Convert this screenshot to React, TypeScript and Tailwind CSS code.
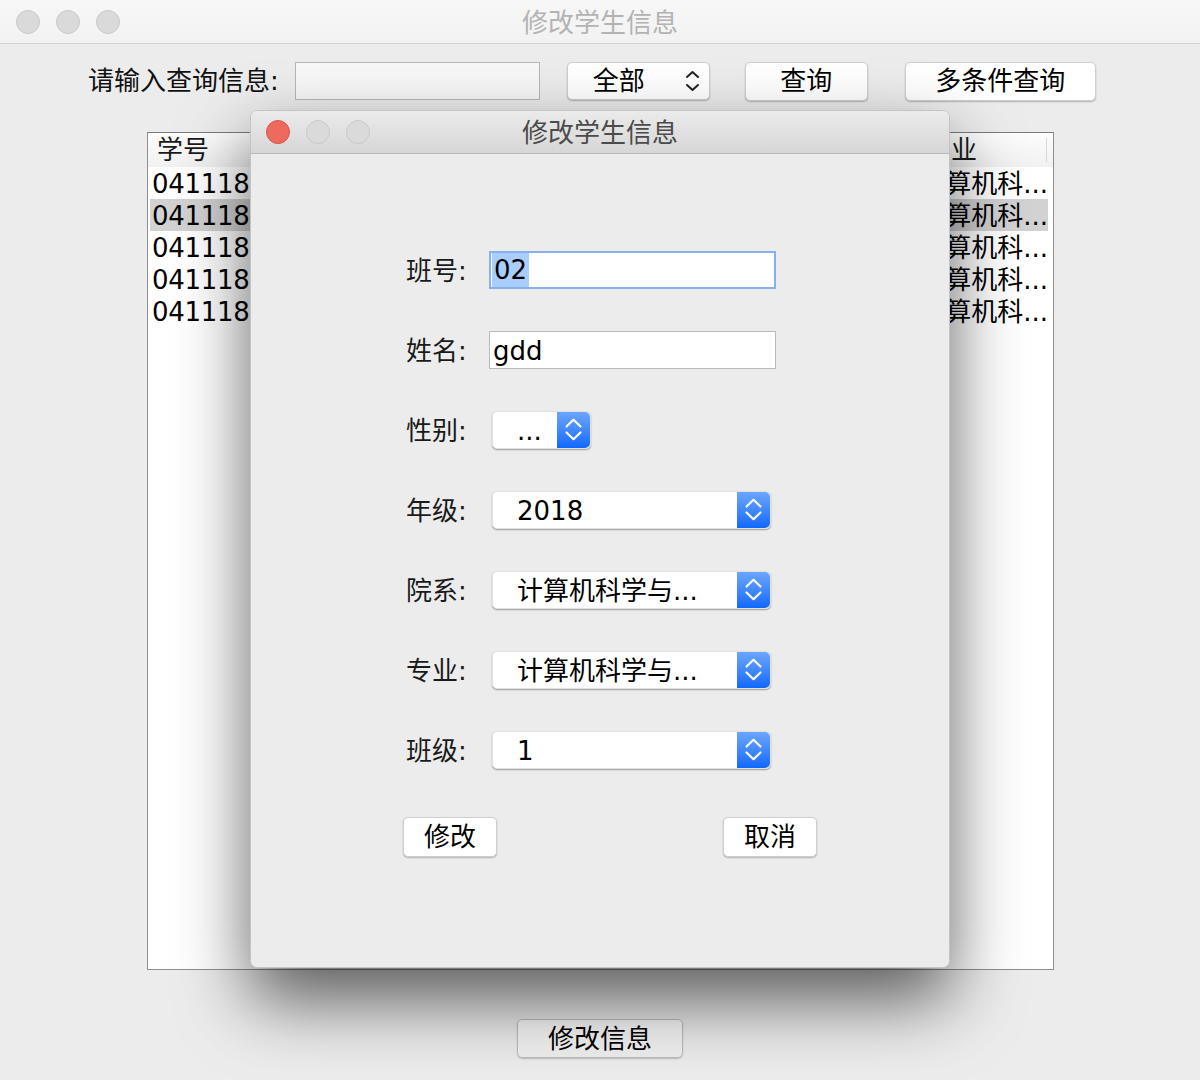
import React from "react";

const font = "font-['DejaVu_Sans','Noto_Sans_CJK_SC',sans-serif]";

const rows = ["041118", "041118", "041118", "041118", "041118"];

function Light({ active }: { active?: boolean }) {
  return (
    <span
      className={
        active
          ? "w-[24px] h-[24px] rounded-full bg-[#ee6a5f] border border-[#d9544a]"
          : "w-[24px] h-[24px] rounded-full bg-[#dadada] border border-[#c9c9c9]"
      }
    />
  );
}

function BlueArrows() {
  return (
    <span className="w-[33px] h-full rounded-r-[5px] bg-gradient-to-b from-[#6aa6ff] to-[#0f67ff] flex items-center justify-center">
      <svg width="33" height="38" viewBox="0 0 33 38" fill="none">
        <path d="M9.5 15.5 L16.5 8.8 L23.5 15.5" stroke="white" strokeWidth="2.2" strokeLinecap="round" strokeLinejoin="round" />
        <path d="M9.5 21.5 L16.5 28.2 L23.5 21.5" stroke="white" strokeWidth="2.2" strokeLinecap="round" strokeLinejoin="round" />
      </svg>
    </span>
  );
}

function Combo({ value, width }: { value: string; width: string }) {
  return (
    <div
      className={`${width} h-[38px] flex items-center bg-white rounded-[5px] shadow-[0_1px_1.5px_rgba(0,0,0,0.35)] border border-[#e2e2e2]`}
    >
      <span className="flex-1 pl-[24px] pt-[1px] text-[26px] leading-[34px] text-black whitespace-nowrap">
        {value}
      </span>
      <BlueArrows />
    </div>
  );
}

function Field({ label, children }: { label: string; children: React.ReactNode }) {
  return (
    <div className="flex items-center h-[38px]">
      <span className="w-[83px] pt-[1px] text-[26px] leading-[34px] text-[#1a1a1a]">{label}</span>
      {children}
    </div>
  );
}

function PushButton({ label, width }: { label: string; width: string }) {
  return (
    <button
      className={`${width} h-[39px] flex items-center justify-center bg-white rounded-[5px] border border-[#cfcfcf] shadow-[0_1px_1.5px_rgba(0,0,0,0.25)] text-[26px] leading-[34px] text-black`}
    >
      {label}
    </button>
  );
}

export default function App() {
  return (
    <div className={`relative w-[1200px] h-[1080px] overflow-hidden bg-[#ececec] ${font}`}>
      {/* main window title bar */}
      <div className="h-[44px] flex items-center bg-gradient-to-b from-[#f7f7f7] to-[#f2f2f2] border-b border-[#d3d3d3] relative">
        <div className="flex gap-[16px] pl-[16px]">
          <Light />
          <Light />
          <Light />
        </div>
        <span className="absolute left-0 right-0 top-[6px] text-center text-[26px] leading-[34px] text-[#b3b3b3] pointer-events-none">
          修改学生信息
        </span>
      </div>

      {/* search row */}
      <div className="flex items-center h-[38px] mt-[18px] pl-[88px]">
        <span className="text-[26px] leading-[34px] text-[#111]">请输入查询信息:</span>
        <input
          className="ml-[16px] w-[245px] h-[38px] bg-[#f7f7f7] border border-[#b6b6b6] outline-none"
          readOnly
        />
        <div className="ml-[27px] w-[143px] h-[38px] flex items-center bg-white rounded-[5px] border border-[#cdcdcd] shadow-[0_1px_1.5px_rgba(0,0,0,0.25)]">
          <span className="flex-1 pl-[25px] text-[26px] leading-[34px] text-black">全部</span>
          <svg width="30" height="36" viewBox="0 0 30 36" fill="none" className="mr-[2px]">
            <path d="M10 14 L15.5 9 L21 14" stroke="#222" strokeWidth="2" strokeLinecap="round" strokeLinejoin="round" />
            <path d="M10 22 L15.5 27 L21 22" stroke="#222" strokeWidth="2" strokeLinecap="round" strokeLinejoin="round" />
          </svg>
        </div>
        <PushButton label="查询" width="ml-[35px] w-[123px]" />
        <PushButton label="多条件查询" width="ml-[37px] w-[191px]" />
      </div>

      {/* table */}
      <div className="ml-[147px] mt-[32px] w-[907px] h-[838px] bg-white border border-[#8f8f8f] border-t-[#7a7a7a]">
        <div className="flex h-[34px] items-center bg-gradient-to-b from-[#fdfdfd] to-[#f1f1f1] text-[26px] leading-[34px] text-[#1a1a1a]">
          <span className="w-[777px] pl-[9px]">学号</span>
          <span className="w-[122px] border-r border-[#d8d8d8] h-[24px] flex items-center">专业</span>
        </div>
        <div className="flex flex-col pl-[2px] pr-[5px]">
          {rows.map((r, i) => (
            <div
              key={i}
              className={`flex items-center h-[32px] pt-[2px] text-[26px] leading-[30px] text-black ${i === 1 ? "bg-[#d2d2d2]" : ""}`}
            >
              <span className="w-[775px] pl-[2px] tracking-[-0.3px]">{r}</span>
              <span className="whitespace-nowrap">计算机科...</span>
            </div>
          ))}
        </div>
      </div>

      {/* bottom button */}
      <div className="mt-[49px] flex justify-center">
        <button className="w-[166px] h-[39px] flex items-center justify-center rounded-[5px] border border-[#bdbdbd] bg-gradient-to-b from-[#fbfbfb] to-[#eeeeee] shadow-[0_1px_1.5px_rgba(0,0,0,0.2)] text-[26px] leading-[34px] text-black">
          修改信息
        </button>
      </div>

      {/* modal dialog */}
      <div className="absolute left-[250px] top-[110px] w-[700px] h-[858px] rounded-[7px] bg-[#ececec] border border-[#c4c4c4] shadow-[0_32px_70px_rgba(0,0,0,0.62)] flex flex-col overflow-hidden">
        <div className="h-[43px] shrink-0 flex items-center relative bg-gradient-to-b from-[#ebebeb] to-[#d6d6d6] border-b border-[#b8b8b8]">
          <div className="flex gap-[16px] pl-[15px]">
            <Light active />
            <Light />
            <Light />
          </div>
          <span className="absolute left-0 right-0 top-[5px] text-center text-[26px] leading-[34px] text-[#4b4b4b]">
            修改学生信息
          </span>
        </div>

        <div className="flex flex-col gap-[42px] pl-[155px] pt-[97px]">
          <Field label="班号:">
            <div className="w-[287px] h-[38px] bg-white border-2 border-[#86b2ec] flex items-center pl-[1px]">
              <span className="bg-[#a9cdfd] text-[26px] leading-[33px] pt-[1px] px-[2px] text-black">02</span>
            </div>
          </Field>
          <Field label="姓名:">
            <div className="w-[287px] h-[38px] bg-white border border-[#bababa] flex items-center pl-[3px] pt-[1px] text-[26px] leading-[34px] text-black">
              gdd
            </div>
          </Field>
          <Field label="性别:">
            <div className="ml-[3px]">
              <Combo value="..." width="w-[99px]" />
            </div>
          </Field>
          <Field label="年级:">
            <div className="ml-[3px]">
              <Combo value="2018" width="w-[279px]" />
            </div>
          </Field>
          <Field label="院系:">
            <div className="ml-[3px]">
              <Combo value="计算机科学与..." width="w-[279px]" />
            </div>
          </Field>
          <Field label="专业:">
            <div className="ml-[3px]">
              <Combo value="计算机科学与..." width="w-[279px]" />
            </div>
          </Field>
          <Field label="班级:">
            <div className="ml-[3px]">
              <Combo value="1" width="w-[279px]" />
            </div>
          </Field>
        </div>

        <div className="flex pl-[152px] mt-[48px] gap-[226px]">
          <PushButton label="修改" width="w-[94px] h-[40px]" />
          <PushButton label="取消" width="w-[94px] h-[40px]" />
        </div>
      </div>
    </div>
  );
}
